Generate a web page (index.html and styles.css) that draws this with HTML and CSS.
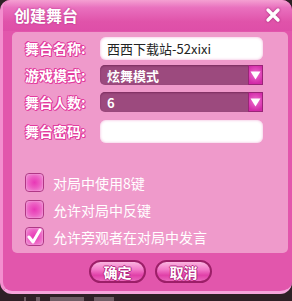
FILE: index.html
```html
<!DOCTYPE html>
<html lang="zh">
<head>
<meta charset="utf-8">
<title>创建舞台</title>
<link rel="stylesheet" href="styles.css">
</head>
<body>
<div class="dialog">
  <div class="titlebar">
    <span class="title">创建舞台</span>
    <svg class="close" width="16" height="16" viewBox="0 0 16 16"><path d="M3 3 L13 13 M13 3 L3 13" stroke="#fff" stroke-width="3.4" stroke-linecap="round"/></svg>
  </div>
  <div class="panel">
    <div class="form">
      <div class="row">
        <span class="label">舞台名称:</span>
        <div class="input">西西下载站-52xixi</div>
      </div>
      <div class="row">
        <span class="label">游戏模式:</span>
        <div class="select"><span class="value">炫舞模式</span><span class="arrow"><svg width="11" height="9" viewBox="0 0 11 9"><path d="M0.5 0.5 H10.5 L5.5 8.5 Z" fill="#fff"/></svg></span></div>
      </div>
      <div class="row">
        <span class="label">舞台人数:</span>
        <div class="select"><span class="value">6</span><span class="arrow"><svg width="11" height="9" viewBox="0 0 11 9"><path d="M0.5 0.5 H10.5 L5.5 8.5 Z" fill="#fff"/></svg></span></div>
      </div>
      <div class="row">
        <span class="label">舞台密码:</span>
        <div class="input"></div>
      </div>
    </div>
    <div class="checks">
      <div class="check"><span class="box"></span><span>对局中使用8键</span></div>
      <div class="check"><span class="box"></span><span>允许对局中反键</span></div>
      <div class="check"><span class="box checked"><svg width="17" height="17" viewBox="0 0 17 17"><path d="M3 9 L7 14 L14 2" stroke="#fff" stroke-width="3" fill="none" stroke-linecap="round" stroke-linejoin="round"/></svg></span><span>允许旁观者在对局中发言</span></div>
    </div>
  </div>
  <div class="buttons">
    <button class="btn">确定</button>
    <button class="btn">取消</button>
  </div>
</div>
<div class="under"><i class="bit w2"></i><i class="bit w1"></i><i class="bit w6"></i><i class="bit w4"></i></div>
</body>
</html>
```

FILE: styles.css
```css
* { box-sizing: border-box; }
html, body { margin: 0; padding: 0; }
body {
  width: 292px;
  height: 301px;
  background: #2e2026;
  font-family: "Noto Sans CJK SC", "Noto Sans", sans-serif;
  overflow: hidden;
}
.dialog {
  width: 292px;
  height: 294px;
  background: #e256ac;
  border-radius: 10px 10px 12px 12px;
  border-left: 3px solid #f38fcf;
  border-bottom: 3px solid #f6a6dc;
  display: flex;
  flex-direction: column;
  overflow: hidden;
}
.titlebar {
  height: 31px;
  display: flex;
  align-items: center;
  justify-content: space-between;
  padding: 0 11px 2px 11px;
  background: linear-gradient(#f4a0d2 0%, #e970be 25%, #e053aa 70%, #de4ea8 100%);
}
.title {
  color: #fff;
  font-size: 16px;
  font-weight: bold;
  text-shadow: 0 0 2px #b02c80;
}
.close { filter: drop-shadow(0 0 1px #a02070); }
.panel {
  margin: 1px 4px 0 9px;
  height: 221px;
  background: #ef9acb;
  border-radius: 5px;
  padding: 5px 0 0 13px;
  display: flex;
  flex-direction: column;
}
.form {
  display: flex;
  flex-direction: column;
  gap: 5px;
}
.row {
  display: flex;
  align-items: center;
  height: 22px;
}
.row:nth-child(4) { margin-top: 2px; }
.label {
  width: 75px;
  color: #fff;
  font-size: 14px;
  font-weight: bold;
  text-shadow: 1px 0 0 #e23c9e, -1px 0 0 #e23c9e, 0 1px 0 #e23c9e, 0 -1px 0 #e23c9e, 1px 1px 0 #e23c9e, -1px -1px 0 #e23c9e;
}
.input {
  width: 163px;
  height: 23px;
  background: #fff;
  border-radius: 6px;
  box-shadow: inset 0 0 3px #f0b0d8;
  font-size: 13px;
  color: #222;
  padding: 0 0 0 7px;
  line-height: 23px;
}
.select {
  width: 163px;
  height: 20px;
  background: #9c4a7e;
  border-radius: 5px 0 0 5px;
  display: flex;
  align-items: center;
  justify-content: space-between;
  box-shadow: inset 0 1px 2px #7a2c5e;
}
.value {
  color: #fff;
  font-size: 13px;
  font-weight: bold;
  padding-left: 7px;
}
.arrow {
  width: 15px;
  height: 20px;
  background: radial-gradient(circle at 50% 45%, #f070d0 0%, #d22aa8 80%);
  border: 1px solid #9a2478;
  display: flex;
  align-items: center;
  justify-content: center;
}
.checks {
  margin-top: 31px;
  display: flex;
  flex-direction: column;
  gap: 8px;
}
.check {
  display: flex;
  align-items: center;
  gap: 9px;
  color: #fff;
  font-size: 14px;
  height: 19px;
}
.box {
  width: 19px;
  height: 19px;
  border: 1px solid #b03886;
  border-radius: 4px;
  background: radial-gradient(circle at 50% 50%, #e838b6 0%, #ec5cc2 45%, #f29ad8 100%);
  box-shadow: inset 0 0 1px #fff;
  display: flex;
  align-items: center;
  justify-content: center;
}
.buttons {
  display: flex;
  justify-content: center;
  gap: 9px;
  padding: 7px 0 0 6px;
}
.btn {
  width: 57px;
  height: 23px;
  border: 2px solid #9c1f68;
  border-radius: 12px;
  background: linear-gradient(#fbb4e0 0%, #f278c8 40%, #e040a8 70%, #ea66bc 100%);
  color: #fff;
  font-family: "Noto Sans CJK SC", sans-serif;
  font-size: 14px;
  font-weight: bold;
  padding: 0;
  text-shadow: 1px 0 0 #b42a80, -1px 0 0 #b42a80, 0 1px 0 #b42a80, 0 -1px 0 #b42a80;
}
.under {
  height: 7px;
  display: flex;
  align-items: flex-end;
  gap: 10px;
  padding-left: 24px;
}
.bit {
  display: block;
  height: 4px;
  background: #6e5c64;
}
.w1 { width: 4px; }
.w2 { width: 2px; }
.w4 { width: 20px; }
.w6 { width: 34px; }
```
